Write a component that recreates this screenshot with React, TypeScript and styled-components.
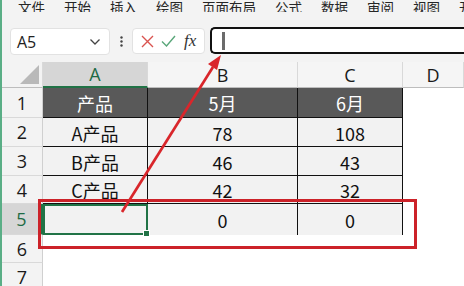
import React from "react";
import styled, { createGlobalStyle } from "styled-components";

const Global = createGlobalStyle`
  html, body { margin: 0; padding: 0; background: #ffffff; }
  body { font-family: "Noto Sans CJK SC", "Noto Sans", sans-serif; overflow: hidden; }
`;

const Page = styled.div`
  position: relative;
  width: 464px;
  height: 286px;
  overflow: hidden;
  border-left: 2px solid #5aae86;
  box-sizing: border-box;
  background: #f3f3f3;
  display: flex;
  flex-direction: column;
`;

const MenuBar = styled.div`
  flex-shrink: 0;
  height: 12px;
  overflow: hidden;
  display: flex;
  align-items: flex-end;
  padding-left: 16px;
  gap: 19px;
  font-size: 13.5px;
  color: #262626;
`;

const MenuItem = styled.span`
  line-height: 14px;
  margin-bottom: -2px;
  white-space: nowrap;
`;

const FormulaRow = styled.div`
  flex-shrink: 0;
  height: 50px;
  display: flex;
  align-items: flex-start;
  padding: 15px 0 0 8px;
  box-sizing: border-box;
`;

const NameBox = styled.div`
  width: 100px;
  height: 27px;
  box-sizing: border-box;
  background: #fff;
  border: 1px solid #e2e2e2;
  border-radius: 4px;
  display: flex;
  align-items: center;
  justify-content: space-between;
  padding: 0 8px 0 6px;
  font-family: "Open Sans", "Noto Sans", sans-serif;
  font-size: 16px;
  color: #222;
  margin-top: 1px;
`;

const Dots = styled.div`
  width: 22px;
  display: flex;
  justify-content: center;
  margin-top: 9px;
`;

const ActionBox = styled.div`
  width: 73px;
  height: 26px;
  box-sizing: border-box;
  background: #fff;
  border: 1px solid #e2e2e2;
  border-radius: 4px;
  display: flex;
  align-items: center;
  justify-content: space-around;
  padding: 0 4px;
  margin-top: 1px;
`;

const Fx = styled.span`
  font-family: "Liberation Serif", serif;
  font-style: italic;
  font-size: 17px;
  color: #333;
`;

const FormulaInput = styled.div`
  flex: 1;
  margin-left: 5px;
  height: 27px;
  box-sizing: border-box;
  background: #fff;
  border: 2px solid #111;
  border-right: none;
  border-radius: 5px 0 0 5px;
  display: flex;
  align-items: center;
  padding-left: 10px;
`;

const Caret = styled.div`
  width: 3px;
  height: 18px;
  background: #6b6b6b;
`;

const Sheet = styled.div`
  flex: 1;
  min-height: 0;
  overflow: hidden;
  display: grid;
  grid-template-columns: 41px 105px 150px 105px 1fr;
  grid-template-rows: 26px 30px 29px 29px 28px 31px 28px 28px;
  background: #fff;
`;

const Corner = styled.div`
  background: #f3f3f3;
  border-right: 1px solid #d9d9d9;
  border-bottom: 1px solid #bdbdbd;
  position: relative;
  &::after {
    content: "";
    position: absolute;
    right: 3px;
    bottom: 3px;
    width: 0;
    height: 0;
    border-left: 19px solid transparent;
    border-bottom: 19px solid #b9b9b9;
  }
`;

const ColHead = styled.div<{ $active?: boolean }>`
  background: ${(p) => (p.$active ? "#d6d6d6" : "#f5f5f5")};
  color: ${(p) => (p.$active ? "#1e6b45" : "#1a1a1a")};
  border-right: 1px solid #d9d9d9;
  border-bottom: ${(p) => (p.$active ? "2px solid #217346" : "1px solid #bdbdbd")};
  display: flex;
  align-items: center;
  justify-content: center;
  font-family: "Open Sans", "Noto Sans", sans-serif;
  font-size: 18px;
`;

const RowHead = styled.div<{ $active?: boolean }>`
  background: ${(p) => (p.$active ? "#d6d6d6" : "#f3f3f3")};
  color: ${(p) => (p.$active ? "#1e6b45" : "#1a1a1a")};
  border-right: ${(p) => (p.$active ? "2px solid #217346" : "1px solid #d0d0d0")};
  border-bottom: 1px solid #d9d9d9;
  display: flex;
  align-items: center;
  justify-content: center;
  font-family: "Open Sans", "Noto Sans", sans-serif;
  font-size: 18px;
`;

type Kind = "head" | "data" | "total" | "empty";

const Cell = styled.div<{ $kind: Kind }>`
  display: flex;
  align-items: center;
  justify-content: center;
  box-sizing: border-box;
  color: ${(p) => (p.$kind === "head" ? "#ffffff" : "#111")};
  background: ${(p) =>
    p.$kind === "head" ? "#595959" : p.$kind === "empty" ? "#ffffff" : "#f2f2f2"};
  border-right: ${(p) => (p.$kind === "empty" ? "none" : "1px solid #111")};
  border-bottom: ${(p) =>
    p.$kind === "head" || p.$kind === "data" ? "1px solid #111" : "none"};
  font-size: 18px;
  padding-top: 1px;
`;

const Selected = styled(Cell)`
  position: relative;
  border: 2px solid #217346;
  &::after {
    content: "";
    position: absolute;
    right: -4px;
    bottom: -4px;
    width: 5px;
    height: 5px;
    background: #217346;
    border: 1px solid #fff;
  }
`;

const Overlay = styled.svg`
  position: absolute;
  left: 0;
  top: 0;
  pointer-events: none;
`;

const menu = ["文件", "开始", "插入", "绘图", "页面布局", "公式", "数据", "审阅", "视图", "开发"];

const rows: { label: string; cells: [string, string, string]; kind: Kind }[] = [
  { label: "1", cells: ["产品", "5月", "6月"], kind: "head" },
  { label: "2", cells: ["A产品", "78", "108"], kind: "data" },
  { label: "3", cells: ["B产品", "46", "43"], kind: "data" },
  { label: "4", cells: ["C产品", "42", "32"], kind: "data" },
];

export default function App() {
  return (
    <Page>
      <Global />
      <MenuBar>
        {menu.map((m) => (
          <MenuItem key={m}>{m}</MenuItem>
        ))}
      </MenuBar>
      <FormulaRow>
        <NameBox>
          <span>A5</span>
          <svg width="12" height="8" viewBox="0 0 12 8">
            <path d="M1.5 1.5 L6 6 L10.5 1.5" fill="none" stroke="#444" strokeWidth="1.3" />
          </svg>
        </NameBox>
        <Dots>
          <svg width="3" height="11" viewBox="0 0 3 11">
            <circle cx="1.5" cy="1.5" r="1.2" fill="#444" />
            <circle cx="1.5" cy="5.5" r="1.2" fill="#444" />
            <circle cx="1.5" cy="9.5" r="1.2" fill="#444" />
          </svg>
        </Dots>
        <ActionBox>
          <svg width="13" height="13" viewBox="0 0 13 13">
            <path d="M1 1 L12 12 M12 1 L1 12" stroke="#d9534f" strokeWidth="1.4" fill="none" />
          </svg>
          <svg width="15" height="12" viewBox="0 0 15 12">
            <path d="M1 6.5 L5.5 11 L14 1" stroke="#5aa77a" strokeWidth="1.4" fill="none" />
          </svg>
          <Fx>fx</Fx>
        </ActionBox>
        <FormulaInput>
          <Caret />
        </FormulaInput>
      </FormulaRow>
      <Sheet>
        <Corner />
        <ColHead $active>A</ColHead>
        <ColHead>B</ColHead>
        <ColHead>C</ColHead>
        <ColHead>D</ColHead>
        {rows.map((r) => (
          <React.Fragment key={r.label}>
            <RowHead>{r.label}</RowHead>
            {r.cells.map((c, i) => (
              <Cell key={i} $kind={r.kind}>
                {c}
              </Cell>
            ))}
            <Cell $kind="empty" />
          </React.Fragment>
        ))}
        <RowHead $active>5</RowHead>
        <Selected $kind="total" />
        <Cell $kind="total">0</Cell>
        <Cell $kind="total">0</Cell>
        <Cell $kind="empty" />
        {["6", "7", "8"].map((n) => (
          <React.Fragment key={n}>
            <RowHead>{n}</RowHead>
            <Cell $kind="empty" />
            <Cell $kind="empty" />
            <Cell $kind="empty" />
            <Cell $kind="empty" />
          </React.Fragment>
        ))}
      </Sheet>
      <Overlay width="464" height="286" viewBox="0 0 464 286">
        <rect x="37.5" y="200.5" width="376" height="47" fill="none" stroke="#cc2229" strokeWidth="3" />
        <line x1="120" y1="212" x2="211" y2="67" stroke="#d9262b" strokeWidth="2.7" />
        <polygon points="219,55 206,64 215,70" fill="#d9262b" />
      </Overlay>
    </Page>
  );
}
